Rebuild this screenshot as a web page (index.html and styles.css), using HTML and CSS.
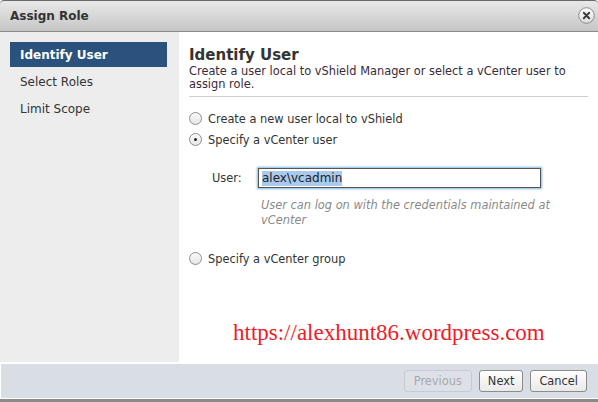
FILE: index.html
```html
<!DOCTYPE html>
<html>
<head>
<meta charset="utf-8">
<link rel="stylesheet" href="styles.css">
</head>
<body>
<div class="dialog">
  <div class="titlebar">
    <span class="title">Assign Role</span>
    <svg class="close" width="17" height="17" viewBox="0 0 17 17">
      <defs>
        <linearGradient id="cg" x1="0" y1="0" x2="0" y2="1">
          <stop offset="0" stop-color="#ffffff"/>
          <stop offset="1" stop-color="#dcdcdc"/>
        </linearGradient>
      </defs>
      <circle cx="8.5" cy="8.5" r="7.8" fill="url(#cg)" stroke="#8a8a8a" stroke-width="1"/>
      <path d="M5.8 5.8 L11.2 11.2 M11.2 5.8 L5.8 11.2" stroke="#3c3c3c" stroke-width="2" stroke-linecap="round"/>
    </svg>
  </div>
  <div class="body">
    <div class="sidebar">
      <div class="step active">Identify User</div>
      <div class="step">Select Roles</div>
      <div class="step">Limit Scope</div>
    </div>
    <div class="content">
      <h1 class="heading">Identify User</h1>
      <p class="desc">Create a user local to vShield Manager or select a vCenter user to assign role.</p>
      <div class="sep"></div>
      <div class="options">
        <label class="radio"><span class="dot"></span>Create a new user local to vShield</label>
        <label class="radio"><span class="dot checked"></span>Specify a vCenter user</label>
        <div class="userrow">
          <span class="ulabel">User:</span>
          <div class="field"><span class="sel">alex\vcadmin</span></div>
        </div>
        <p class="hint">User can log on with the credentials maintained at vCenter</p>
        <label class="radio group"><span class="dot"></span>Specify a vCenter group</label>
      </div>
      <div class="watermark">https://alexhunt86.wordpress.com</div>
    </div>
  </div>
  <div class="footer">
    <button class="btn disabled">Previous</button>
    <button class="btn">Next</button>
    <button class="btn">Cancel</button>
  </div>
</div>
</body>
</html>
```

FILE: styles.css
```css
html, body {
  margin: 0;
  padding: 0;
  background: #ffffff;
}
body {
  font-family: "DejaVu Sans", Verdana, sans-serif;
  font-size: 11.4px;
  color: #333;
}
.dialog {
  width: 598px;
  height: 402px;
  box-sizing: border-box;
  display: flex;
  flex-direction: column;
  background: #fff;
  border-bottom: 3px solid #8a8a8a;
  overflow: hidden;
}
.titlebar {
  flex: none;
  box-sizing: border-box;
  height: 32px;
  border-top: 1px solid #6a6a6a;
  border-bottom: 1px solid #8c8c8c;
  border-radius: 4px 4px 0 0;
  background: linear-gradient(#e8e8e8, #c6c6c6);
  display: flex;
  align-items: center;
  justify-content: space-between;
  padding: 0 3px 0 10px;
}
.title {
  font-weight: bold;
  font-size: 12px;
  color: #333;
}
.close {
  display: block;
  margin-top: -1px;
}
.body {
  flex: 1;
  display: flex;
  min-height: 0;
}
.sidebar {
  width: 179px;
  flex: none;
  background: #ededed;
  box-sizing: border-box;
  padding: 10px 12px 0 10px;
  display: flex;
  flex-direction: column;
  gap: 2px;
}
.step {
  height: 25px;
  line-height: 26px;
  padding-left: 10px;
  font-size: 12px;
  color: #333;
}
.step.active {
  background: #2b527c;
  color: #fff;
  font-weight: bold;
}
.content {
  flex: 1;
  padding: 13px 10px 0 10px;
  display: flex;
  flex-direction: column;
}
.heading {
  margin: 0;
  font-size: 15px;
  font-weight: bold;
  color: #333;
  line-height: 20px;
}
.desc {
  margin: 0;
  line-height: 13px;
  color: #3a2a3a;
}
.sep {
  height: 1px;
  background: #cfcfcf;
  margin-top: 5px;
}
.options {
  padding-top: 11px;
  display: flex;
  flex-direction: column;
}
.radio {
  display: flex;
  align-items: center;
  height: 21px;
  color: #333;
}
.dot {
  width: 11px;
  height: 11px;
  border: 1px solid #8e8e8e;
  border-radius: 50%;
  background: linear-gradient(#fafafa, #e6e6e6);
  margin-right: 6px;
  position: relative;
  flex: none;
}
.dot.checked::after {
  content: "";
  position: absolute;
  left: 4px;
  top: 4px;
  width: 3px;
  height: 3px;
  border-radius: 50%;
  background: #222;
}
.userrow {
  display: flex;
  align-items: center;
  margin-top: 18px;
  padding-left: 23px;
}
.ulabel {
  width: 46px;
  color: #333;
}
.field {
  width: 283px;
  height: 20px;
  box-sizing: border-box;
  border: 1px solid #555;
  box-shadow: 0 0 2px 1px #7fb6e0;
  display: flex;
  align-items: center;
  padding-left: 3px;
  background: #fff;
}
.sel {
  background: #a9c9ee;
  color: #222;
  font-size: 12px;
  line-height: 15px;
}
.hint {
  margin: 10px 0 0 72px;
  width: 300px;
  font-style: italic;
  color: #8a8a8a;
  line-height: 15px;
}
.radio.group {
  margin-top: 20px;
}
.watermark {
  margin-top: 51px;
  padding-left: 44px;
  font-family: "Liberation Serif", "Times New Roman", serif;
  font-size: 23px;
  line-height: 26px;
  color: #ee1c25;
}
.footer {
  flex: none;
  height: 34px;
  margin: 2px 0 1px 1px;
  background: #d9dde4;
  display: flex;
  align-items: center;
  justify-content: flex-end;
  gap: 7px;
  padding-right: 11px;
}
.btn {
  height: 22px;
  padding: 0 8px;
  border: 1px solid #8c8c8c;
  border-radius: 3px;
  background: linear-gradient(#ffffff, #e9e9e9);
  font-family: "DejaVu Sans", Verdana, sans-serif;
  font-size: 11.4px;
  color: #333;
}
.btn.disabled {
  border-color: #c7ccd3;
  background: #dde1e7;
  color: #a5a9ae;
  padding: 0 9px;
}
```
